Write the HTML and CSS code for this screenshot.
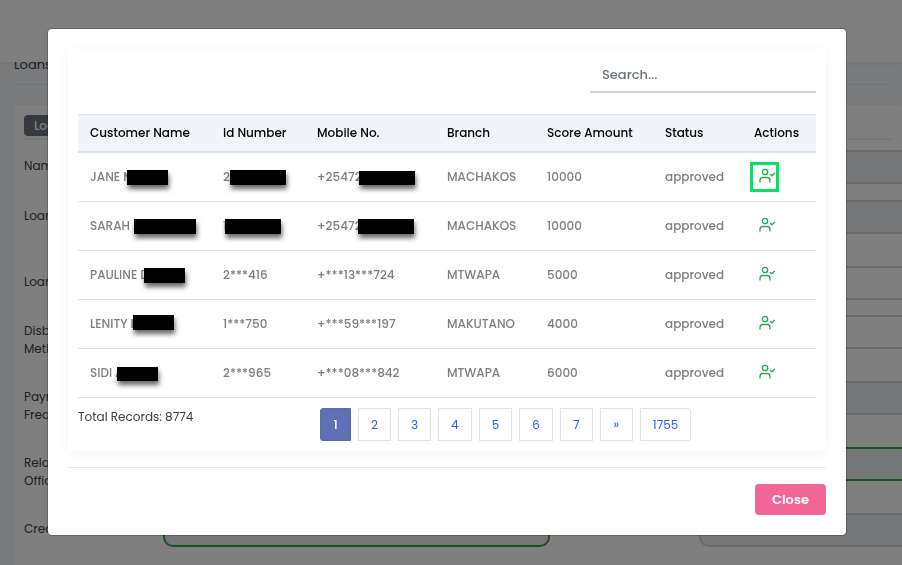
FILE: index.html
```html
<!DOCTYPE html>
<html lang="en">
<head>
<meta charset="utf-8">
<title>Loans</title>
<link rel="stylesheet" href="styles.css">
</head>
<body>
<div class="page">
  <header class="topbar"></header>
  <nav class="crumbs"><span>Loans</span></nav>
  <main class="panel">
    <div class="tabs"><span class="tab">Loan</span></div>
    <form class="form">
      <div class="row"><label for="a1">Name</label><input id="a1" disabled><input aria-label="Customer" disabled></div>
      <div class="row tall"><label for="a2">Loan</label><input id="a2" disabled><input aria-label="Product" disabled></div>
      <div class="row"><label for="a3">Loan</label><input id="a3"><input aria-label="Amount"></div>
      <div class="row tall"><label for="a4">Disburse Method</label><input id="a4"><input aria-label="Method"></div>
      <div class="row tall"><label for="a5">Payment Frequency</label><input id="a5" disabled><input aria-label="Frequency" disabled></div>
      <div class="row tall"><label for="a6">Relation Officer</label><input id="a6" disabled><input class="valid" aria-label="Officer" disabled></div>
      <div class="row"><label for="a7">Credit</label><input id="a7" class="valid" disabled><input aria-label="Score" disabled></div>
    </form>
  </main>
</div>

<svg class="defs" aria-hidden="true">
  <symbol id="user-check" viewBox="0 0 16 16">
    <circle cx="6" cy="4" r="2.7"/>
    <path d="M1 14v-1.500a3 3 0 0 1 3-3h4a3 3 0 0 1 3 3V14"/>
    <path d="M11.500 6.500l1.300 1.300L15.500 5.200"/>
  </symbol>
</svg>

<div class="backdrop">
  <section class="modal" role="dialog" aria-modal="true" aria-label="Customers">
    <div class="card">
      <div class="search"><input type="text" placeholder="Search..." aria-label="Search"></div>
      <table>
        <colgroup><col class="c-name"><col class="c-id"><col class="c-mobile"><col class="c-branch"><col class="c-score"><col class="c-status"><col class="c-actions"></colgroup>
        <thead>
          <tr><th>Customer Name</th><th>Id Number</th><th>Mobile No.</th><th>Branch</th><th>Score Amount</th><th>Status</th><th>Actions</th></tr>
        </thead>
        <tbody>
          <tr><td>JANE M<i class="mask jane"></i></td><td>2<i class="mask wide id-one"></i></td><td>+25472<i class="mask wide phone-one low"></i></td><td>MACHAKOS</td><td>10000</td><td>approved</td><td><button class="act marked" aria-label="Select"><svg><use href="#user-check"/></svg></button></td></tr>
          <tr><td>SARAH<i class="mask sarah"></i></td><td>1<i class="mask wide id-two"></i></td><td>+25472<i class="mask wide phone-two"></i></td><td>MACHAKOS</td><td>10000</td><td>approved</td><td><button class="act" aria-label="Select"><svg><use href="#user-check"/></svg></button></td></tr>
          <tr><td>PAULINE D<i class="mask pauline"></i></td><td>2***416</td><td>+***13***724</td><td>MTWAPA</td><td>5000</td><td>approved</td><td><button class="act" aria-label="Select"><svg><use href="#user-check"/></svg></button></td></tr>
          <tr><td>LENITY L<i class="mask lenity"></i></td><td>1***750</td><td>+***59***197</td><td>MAKUTANO</td><td>4000</td><td>approved</td><td><button class="act" aria-label="Select"><svg><use href="#user-check"/></svg></button></td></tr>
          <tr><td>SIDI A<i class="mask sidi low"></i></td><td>2***965</td><td>+***08***842</td><td>MTWAPA</td><td>6000</td><td>approved</td><td><button class="act" aria-label="Select"><svg><use href="#user-check"/></svg></button></td></tr>
        </tbody>
      </table>
      <div class="table-foot">
        <span class="total">Total Records: 8774</span>
        <nav class="pages" aria-label="Pages">
          <a href="#" class="current">1</a><a href="#">2</a><a href="#">3</a><a href="#">4</a><a href="#">5</a><a href="#">6</a><a href="#">7</a><a href="#">»</a><a href="#" class="last">1755</a>
        </nav>
      </div>
    </div>
    <footer class="actions"><button class="close">Close</button></footer>
  </section>
</div>
</body>
</html>
```
FILE: styles.css
```css
* { box-sizing: border-box; }
body {
  margin: 0;
  background: #f3f5f9;
  color: #3e3a4b;
  font: 12px/18px Poppins, Inter, "Open Sans", sans-serif;
  overflow: hidden;
}
.page { height: 100vh; overflow: hidden; }
.topbar {
  position: relative;
  z-index: 1;
  height: 62px;
  background: #fff;
  box-shadow: 0 0 8px rgba(0, 0, 0, .08);
}
.crumbs {
  display: flow-root;
  height: 23px;
  margin: 0 14px 20px;
  border-bottom: 1px solid #e2e4e8;
  font-size: 13px;
}
.crumbs span { display: block; margin-top: -6px; }
.panel {
  margin-left: 14px;
  padding: 10px;
  min-height: 100vh;
  background: #fff;
  border-radius: 4px;
}
.tabs { border-bottom: 2px solid #f1f1f1; padding-bottom: 2px; margin-bottom: 10px; }
.tab {
  display: block;
  width: 110px;
  height: 21px;
  padding-left: 10px;
  line-height: 21px;
  border-radius: 4px;
  background: #6c757d;
  color: #fff;
  font-weight: 500;
}
.row {
  display: grid;
  grid-template-columns: 139px 387px 387px;
  align-items: start;
  height: 49px;
}
.row.tall { height: 66px; }
.row:first-child { height: 50px; }
.row label { width: 80px; padding-top: 7px; }
.row input {
  height: 34px;
  border: 2px solid #ced4da;
  border-radius: 10px;
  background: #fff;
}
.row input:last-child { margin-left: 149px; }
.row input:disabled { background: #e9ecef; }
.row input.valid { border-color: #28a745; }

.defs { position: absolute; width: 0; height: 0; }
.backdrop {
  position: fixed;
  z-index: 10;
  inset: 0;
  display: flex;
  justify-content: center;
  align-items: flex-start;
  padding: 28px 8px 0 0;
  background: rgba(0, 0, 0, .5);
}
.modal {
  flex: 0 1 800px;
  padding: 20px;
  background: #fff;
  background-clip: padding-box;
  border: 1px solid rgba(0, 0, 0, .2);
  border-radius: 5px;
}
.card {
  padding: 8px 10px 10px;
  border-radius: 4px;
  box-shadow: 0 2px 12px rgba(0, 0, 0, .05);
}
.search { display: flex; justify-content: flex-end; margin-bottom: 21px; }
.search input {
  width: 226px;
  height: 36px;
  padding: 2px 12px 0;
  border: 0;
  border-bottom: 2px solid #ced4da;
  background: transparent;
  font: inherit;
  font-size: 13px;
  font-weight: 500;
}
.search input::placeholder { color: #6c757d; }

table { width: 100%; table-layout: fixed; border-spacing: 0; }
.c-name { width: 133px; }
.c-id { width: 94px; }
.c-mobile { width: 130px; }
.c-branch { width: 100px; }
.c-score { width: 118px; }
.c-status { width: 89px; }
.c-actions { width: 74px; }
th, td { padding: 0 12px; text-align: left; font-weight: 500; white-space: nowrap; }
th {
  height: 39px;
  background: #f1f5f9;
  border-top: 1px solid #dee2e6;
  border-bottom: 2px solid #dee2e6;
  color: #000;
}
td {
  position: relative;
  height: 49px;
  border-bottom: 1px solid #dee2e6;
  color: #808080;
}
.mask {
  position: absolute;
  top: 17px;
  width: 41px;
  height: 15px;
  background: #000;
  box-shadow: 1px 4px 5px rgba(0, 0, 0, .6);
}
.mask.low { top: 18px; height: 14px; }
.mask.wide { width: 56px; }
.jane { left: 49px; }
.sarah { left: 56px; width: 62px; }
.pauline { left: 66px; }
.lenity { left: 55px; top: 15px; }
.sidi { left: 39px; }
.id-one { left: 19px; }
.id-two { left: 14px; }
.phone-one { left: 54px; }
.phone-two { left: 53px; }

.act {
  display: flex;
  width: 29px;
  height: 30px;
  margin-left: -4px;
  padding: 6px 0 0 9px;
  border: 0;
  background: none;
}
.act.marked { padding: 3px 0 0 6px; border: 3px solid #00e664; }
.act svg {
  flex: none;
  width: 16px;
  height: 16px;
  fill: none;
  stroke: #28a745;
  stroke-width: 1.3;
  stroke-linecap: round;
  stroke-linejoin: round;
}

.table-foot { display: grid; grid-template-columns: 242px 1fr; margin-top: 10px; }
.pages { display: flex; gap: 7px; }
.pages a {
  min-width: 33px;
  height: 33px;
  padding: 0 12px;
  border: 1px solid #dee2e6;
  color: #3355ff;
  line-height: 32px;
  text-align: center;
  text-decoration: none;
}
.pages .current {
  min-width: 31px;
  padding: 0 10px;
  border-color: #5c6bb5;
  border-radius: 3px 0 0 3px;
  background: #5f70b5;
  color: #fff;
  font-weight: 500;
}
.pages .last { border-radius: 0 3px 3px 0; }

.actions {
  display: flex;
  justify-content: flex-end;
  margin-top: 16px;
  padding-top: 16px;
  border-top: 1px solid #e4e6e9;
}
.close {
  min-width: 71px;
  height: 31px;
  border: 0;
  border-radius: 4px;
  background: #f16697;
  color: #fff;
  font: inherit;
  font-size: 13px;
  font-weight: 600;
}
```
